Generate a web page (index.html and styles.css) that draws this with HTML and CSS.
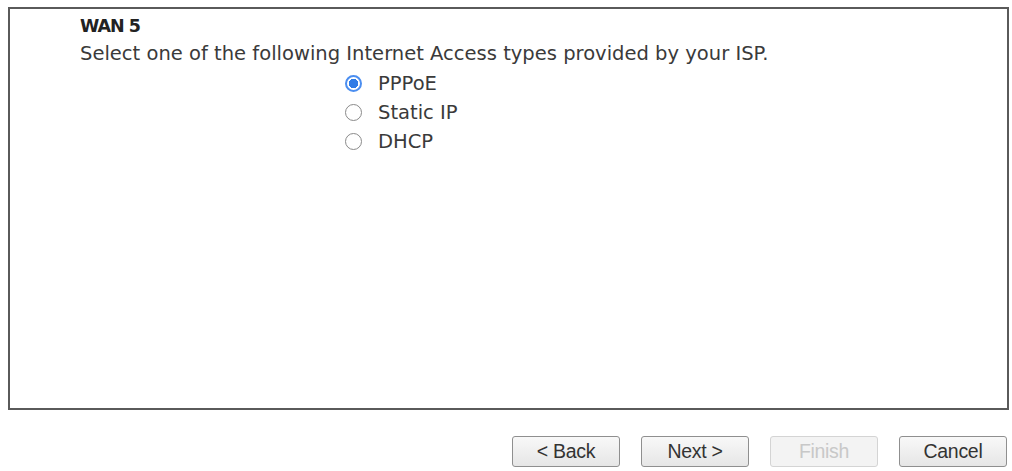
FILE: index.html
```html
<!DOCTYPE html>
<html>
<head>
<meta charset="utf-8">
<link rel="stylesheet" href="styles.css">
</head>
<body>
<div class="page">
  <div class="panel">
    <div class="title">WAN 5</div>
    <div class="desc">Select one of the following Internet Access types provided by your ISP.</div>
    <div class="options">
      <label class="opt"><span class="radio checked"></span><span>PPPoE</span></label>
      <label class="opt"><span class="radio"></span><span>Static IP</span></label>
      <label class="opt"><span class="radio"></span><span>DHCP</span></label>
    </div>
  </div>
  <div class="buttons">
    <button class="btn">&lt; Back</button>
    <button class="btn">Next &gt;</button>
    <button class="btn disabled">Finish</button>
    <button class="btn">Cancel</button>
  </div>
</div>
</body>
</html>
```
FILE: styles.css
```css
html, body {
  margin: 0;
  padding: 0;
  background: #ffffff;
}
.page {
  padding: 7px 4px 0 8px;
}
.panel {
  box-sizing: border-box;
  width: 1001px;
  height: 403px;
  border: 2px solid #5a5a5a;
  padding: 4px 0 0 70px;
}
.title {
  font-family: "DejaVu Sans", Verdana, sans-serif;
  font-weight: bold;
  font-size: 17.5px;
  color: #222;
  line-height: 26px;
  letter-spacing: -1px;
}
.desc {
  font-family: "DejaVu Sans", Verdana, sans-serif;
  font-size: 19.55px;
  color: #3a3a3a;
  line-height: 27px;
  margin-top: 1px;
}
.options {
  display: flex;
  flex-direction: column;
  padding-left: 265px;
  margin-top: 1.5px;
}
.opt {
  display: flex;
  align-items: center;
  height: 29px;
  font-family: "DejaVu Sans", Verdana, sans-serif;
  font-size: 19.55px;
  color: #3a3a3a;
}
.radio {
  box-sizing: border-box;
  width: 17px;
  height: 17px;
  border-radius: 50%;
  border: 1.5px solid #8a8a8a;
  background: #fff;
  margin-right: 16px;
}
.radio.checked {
  border: 2px solid #4b8ef0;
  background: radial-gradient(circle, #2f7be6 0 4.5px, #ffffff 5px);
}
.buttons {
  display: flex;
  justify-content: flex-end;
  gap: 21px;
  margin-top: 26px;
  padding-right: 1px;
}
.btn {
  box-sizing: border-box;
  width: 108px;
  height: 31px;
  border: 1.5px solid #8f8f8f;
  border-radius: 3px;
  background: linear-gradient(#f8f8f8, #e6e6e6);
  font-family: "Liberation Sans", Arial, sans-serif;
  font-size: 19.5px;
  color: #333;
  padding: 0;
  letter-spacing: -0.3px;
}
.btn.disabled {
  color: #c8c8c8;
  border-color: #d4d4d4;
  background: #f3f3f3;
}
```
